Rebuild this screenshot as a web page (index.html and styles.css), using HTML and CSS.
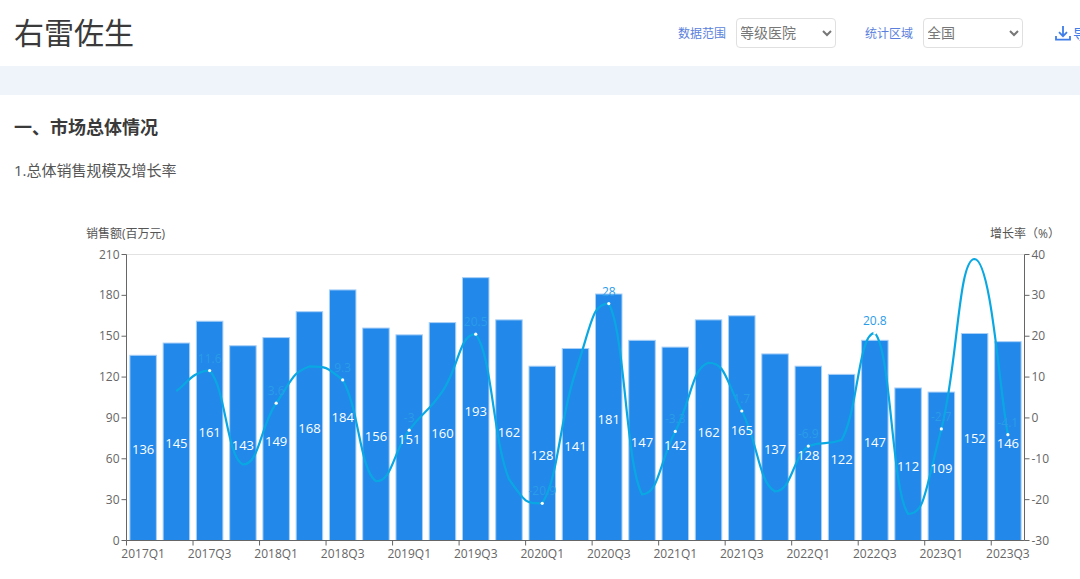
FILE: index.html
```html
<!DOCTYPE html>
<html lang="zh-CN">
<head>
    <meta charset="UTF-8">
    <title>右雷佐生</title>
    <link rel="stylesheet" href="styles.css">
</head>
<body>
    <div class="top-bar">
        <h1 class="drug-name">右雷佐生</h1>
        <div class="filters">
            <label class="filter-label">数据范围</label>
            <select class="filter-select">
                <option>等级医院</option>
            </select>
            <label class="filter-label area-label">统计区域</label>
            <select class="filter-select">
                <option>全国</option>
            </select>
            <a class="export-link">
                <svg class="export-icon" viewBox="0 0 16 16">
                    <path d="M8 1v10M4 7.2l4 4 4-4M1 11v3.6h14V11"></path>
                </svg>
                <span>导出</span>
            </a>
        </div>
    </div>
    <div class="band"></div>
    <div class="content">
        <h2 class="section-title">一、市场总体情况</h2>
        <p class="sub-title">1.总体销售规模及增长率</p>
        <svg class="chart" id="salesChart" width="1080" height="379" viewBox="0 200 1080 379"></svg>
    </div>
    <script src="chart.js"></script>
</body>
</html>
```

FILE: styles.css
```css
html, body {
    margin: 0;
    height: 100%;
    overflow: hidden;
    background: #fff;
}

body {
    width: 1080px;
    font-family: "Open Sans", "Noto Sans CJK SC", sans-serif;
    color: #333;
}

.top-bar {
    display: flex;
    align-items: center;
    height: 66px;
    padding-left: 14px;
}

.drug-name {
    width: 664px;
    flex: none;
    margin: 0;
    font-size: 30px;
    font-weight: 400;
    line-height: 66px;
    color: #3a3a3a;
}

.filters {
    display: flex;
    flex: none;
    align-items: center;
    margin-bottom: 1px;
    white-space: nowrap;
}

.filter-label {
    flex: none;
    width: 48px;
    margin-right: 10px;
    font-size: 12px;
    color: #5b7fdc;
}

.area-label {
    margin-left: 29px;
}

.filter-select {
    flex: none;
    width: 100px;
    height: 30px;
    padding: 0;
    border: 1px solid #e0e0e0;
    border-radius: 4px;
    background: #fff;
    font-family: inherit;
    font-size: 14px;
    color: #777;
    text-indent: -1px;
}

.export-link {
    display: flex;
    flex: none;
    align-items: center;
    gap: 2px;
    margin-left: 32px;
    font-size: 14px;
    color: #3f7de8;
}

.export-icon {
    width: 16px;
    height: 16px;
    fill: none;
    stroke: #3f7de8;
    stroke-width: 1.8;
}

.band {
    height: 29px;
    background: #eff3fa;
}

.content {
    padding-top: 20px;
}

.section-title {
    margin: 0 0 0 14px;
    font-size: 18px;
    font-weight: 700;
    line-height: 24px;
    color: #3a3a3a;
}

.sub-title {
    margin: 21px 0 0 14px;
    font-size: 15px;
    line-height: 20px;
    color: #555;
}

.chart {
    display: block;
    margin-top: 19px;
}

.chart text {
    font-family: "Open Sans", "Noto Sans CJK SC", sans-serif;
}

.bar {
    fill: #2288ea;
    stroke: #a9d0f7;
    stroke-width: 1;
}

.bar-value {
    font-size: 13px;
    fill: #fff;
    text-anchor: middle;
}

.rate-line {
    fill: none;
    stroke: #0aa8e2;
    stroke-width: 2.2;
}

.rate-dot {
    fill: #fff;
}

.rate-value {
    font-size: 12px;
    fill: #2a9ce8;
    text-anchor: middle;
}

.axis-line {
    stroke: #666;
    stroke-width: 1;
    fill: none;
}

.top-line {
    stroke: #e2e2e2;
    stroke-width: 1;
}

.axis-text {
    font-size: 12px;
    fill: #666;
}

.axis-name {
    font-size: 12px;
    fill: #555;
}
```

FILE: chart.js
```js
var sales = [136, 145, 161, 143, 149, 168, 184, 156, 151, 160, 193, 162, 128, 141, 181, 147, 142, 162, 165, 137, 128, 122, 147, 112, 109, 152, 146];

// growth rate per quarter, null where there is no point, label only on even quarters
var rates = [null, 6.6, 11.6, -11.4, 3.6, 12.6, 9.3, -15.5, -3, 6.5, 20.5, -15, -20.9, 11.2, 28, -18.7, -3.3, 13.5, 1.7, -18, -6.9, -5.4, 20.8, -23.5, -2.7, 38.9, -4.1];
var rateLabels = {2: "11.6", 4: "3.6", 6: "9.3", 8: "-3", 10: "20.5", 12: "-20.9", 14: "28", 16: "-3.3", 18: "1.7", 20: "-6.9", 22: "20.8", 24: "-2.7", 26: "-4.1"};

var left = 126.5, right = 1024.5, top_y = 255.5, bottom = 541.5;
var step = (right - left) / sales.length;
var barWidth = 26.5;

function salesY(v) { return bottom - v * (bottom - top_y) / 210; }
function rateY(v) { return top_y + (40 - v) * (bottom - top_y) / 70; }
function centerX(i) { return left + step * (i + 0.5); }
function clamp(v, a, b) { return Math.max(Math.min(a, b), Math.min(Math.max(a, b), v)); }

var html = "";

html += '<line class="top-line" x1="' + left + '" x2="' + right + '" y1="' + top_y + '" y2="' + top_y + '"/>';

for (var i = 0; i < sales.length; i++) {
    var y = salesY(sales[i]);
    html += '<rect class="bar" x="' + (centerX(i) - barWidth / 2) + '" y="' + y + '" width="' + barWidth + '" height="' + (bottom - y) + '"/>';
}

// smooth line through the rate points, control points stay inside each segment so peaks sit on the points
var pts = [];
for (var i = 1; i < rates.length; i++) {
    pts.push([centerX(i), rateY(rates[i])]);
}
var d = "M" + pts[0][0] + " " + pts[0][1];
for (var i = 0; i < pts.length - 1; i++) {
    var p0 = pts[Math.max(i - 1, 0)], p1 = pts[i], p2 = pts[i + 1], p3 = pts[Math.min(i + 2, pts.length - 1)];
    var c1y = clamp(p1[1] + (p2[1] - p0[1]) / 4, p1[1], p2[1]);
    var c2y = clamp(p2[1] - (p3[1] - p1[1]) / 4, p1[1], p2[1]);
    d += " C" + (p1[0] + (p2[0] - p0[0]) / 4) + " " + c1y + " " + (p2[0] - (p3[0] - p1[0]) / 4) + " " + c2y + " " + p2[0] + " " + p2[1];
}
html += '<path class="rate-line" d="' + d + '"/>';

for (var i in rateLabels) {
    var x = centerX(+i), y = rateY(rates[i]);
    html += '<circle class="rate-dot" cx="' + x + '" cy="' + y + '" r="1.6"/>';
    html += '<text class="rate-value" x="' + x + '" y="' + (y - 8) + '">' + rateLabels[i] + '</text>';
}

for (var i = 0; i < sales.length; i++) {
    html += '<text class="bar-value" x="' + centerX(i) + '" y="' + ((salesY(sales[i]) + bottom) / 2 + 6.5) + '">' + sales[i] + '</text>';
}

// axes
html += '<path class="axis-line" d="M' + left + ' ' + top_y + 'V' + bottom + 'H' + right + 'V' + top_y + '"/>';
for (var k = 0; k <= 7; k++) {
    var ty = bottom - k * (bottom - top_y) / 7;
    html += '<path class="axis-line" d="M' + (left - 5) + ' ' + ty + 'H' + left + 'M' + right + ' ' + ty + 'H' + (right + 5) + '"/>';
    html += '<text class="axis-text" text-anchor="end" x="' + (left - 7) + '" y="' + (ty + 4) + '">' + k * 30 + '</text>';
    html += '<text class="axis-text" x="' + (right + 7) + '" y="' + (ty + 4) + '">' + (k * 10 - 30) + '</text>';
}
for (var i = 0; i < sales.length; i += 2) {
    var tx = left + step * i;
    html += '<path class="axis-line" d="M' + tx + ' ' + bottom + 'V' + (bottom + 5) + '"/>';
    var name = (2017 + Math.floor(i / 4)) + "Q" + (i % 4 + 1);
    html += '<text class="axis-text" text-anchor="middle" x="' + centerX(i) + '" y="' + (bottom + 17) + '">' + name + '</text>';
}
html += '<text class="axis-name" x="86" y="238.5">销售额(百万元)</text>';
html += '<text class="axis-name" x="990" y="238.5">增长率（%）</text>';

document.getElementById("salesChart").innerHTML = html;
```
